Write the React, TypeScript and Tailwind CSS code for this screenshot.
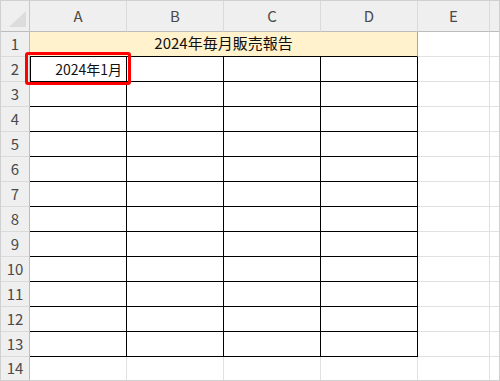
import React from "react";

const FONT = { fontFamily: '"Noto Sans CJK JP", "Noto Sans", sans-serif' };

const cols = ["A", "B", "C", "D", "E"];

export default function App() {
  const rows = Array.from({ length: 14 }, (_, i) => i + 1);
  return (
    <div className="w-[500px] h-[381px] bg-white" style={FONT}>
      <div className="relative w-[500px] h-[381px] border border-[#d0d0d0] box-border overflow-hidden">
        <div className="grid grid-cols-[29px_97px_97px_97px_97px_72px_9px] grid-rows-[31px_repeat(13,25px)_23px]">
          <div className="relative bg-[#efefef] border-r border-b border-r-[#c8c8c8] border-b-[#bcbcbc] box-border">
            <svg className="absolute left-0 top-0" width="28" height="30" viewBox="0 0 28 30">
              <polygon points="8,26 25,10 25,26" fill="#dcdcdc" />
            </svg>
          </div>
          {cols.map((c) => (
            <div
              key={c}
              className="bg-[#efefef] border-b border-b-[#bcbcbc] border-r border-r-[#dadada] box-border flex items-center justify-center text-[15px] text-[#4a4a4a] pt-[1px]"
            >
              {c}
            </div>
          ))}
          <div className="bg-[#efefef] border-b border-b-[#bcbcbc] box-border" />

          {rows.map((r) => {
            const last = r === 14;
            const rh = (
              <div
                key={`h${r}`}
                className={`bg-[#efefef] border-r border-r-[#bcbcbc] box-border flex items-center justify-center text-[15px] text-[#4a4a4a] ${
                  last ? "" : "border-b border-b-[#dadada]"
                }`}
              >
                {r}
              </div>
            );
            if (r === 1) {
              return (
                <React.Fragment key={r}>
                  {rh}
                  <div className="col-span-4 bg-[#fff2cc] border-b border-b-black border-r border-r-[#a6a6a6] box-border flex items-center justify-center text-[15px] text-[#111] pb-[2px]">
                    2024年毎月販売報告
                  </div>
                  <div className="border-r border-b border-[#e1e1e1] box-border" />
                  <div className="border-b border-[#e1e1e1] box-border" />
                </React.Fragment>
              );
            }
            const inTable = r >= 2 && r <= 13;
            return (
              <React.Fragment key={r}>
                {rh}
                {[0, 1, 2, 3].map((ci) => (
                  <div
                    key={ci}
                    className={`box-border ${
                      inTable
                        ? "border-r border-b border-black"
                        : "border-r border-[#e1e1e1]"
                    } ${r === 2 && ci === 0 ? "shadow-[inset_1px_0_0_#000] flex items-center justify-end pr-[4px] text-[14px] text-[#111]" : ""}`}
                  >
                    {r === 2 && ci === 0 ? "2024年1月" : null}
                  </div>
                ))}
                <div className={`box-border border-r border-[#e1e1e1] ${last ? "" : "border-b"}`} />
                <div className={`box-border border-[#e1e1e1] ${last ? "" : "border-b"}`} />
              </React.Fragment>
            );
          })}
        </div>
        <div className="absolute left-[24px] top-[51px] w-[106px] h-[33px] border-[3px] border-[#ff0000] rounded-[3px] box-border" />
      </div>
    </div>
  );
}
